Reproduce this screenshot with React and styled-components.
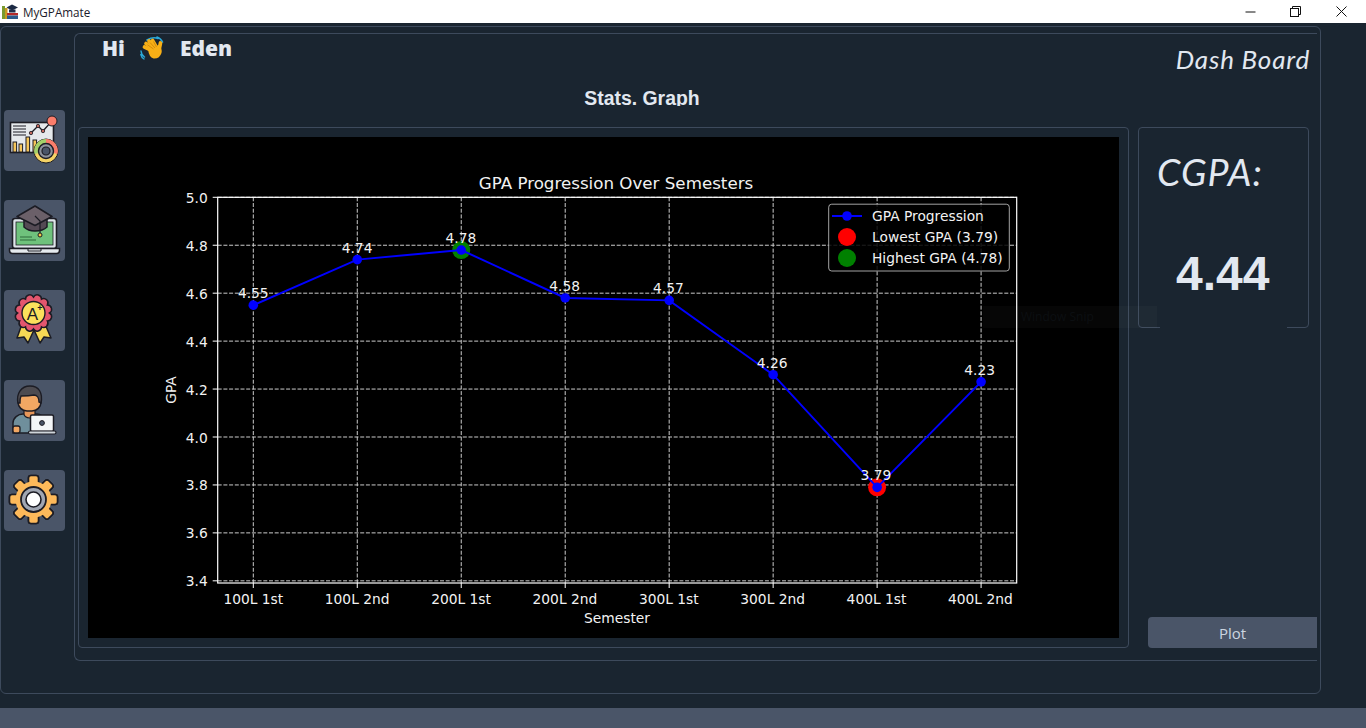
import React from "react";
import styled, { createGlobalStyle } from "styled-components";

const Global = createGlobalStyle`
  html, body { margin: 0; padding: 0; background: #1a2530; overflow: hidden; }
  #root { width: 1366px; height: 728px; }
`;

const Page = styled.div`
  position: relative;
  width: 1366px;
  height: 728px;
  display: flex;
  flex-direction: column;
  background: #1a2530;
  color: #e2e8f0;
  font-family: "Open Sans", sans-serif;
  overflow: hidden;
`;
const TitleBar = styled.header`
  flex: 0 0 23px;
  display: flex;
  align-items: center;
  background: #fff;
  color: #111;
  font-size: 11.7px;
  padding-left: 2px;
`;
const AppName = styled.span`
  margin-left: 5px;
  flex: 1;
  color: #1a1a2a;
  margin-top: 1px;
  font-family: "Open Sans", sans-serif;
`;
const WinButton = styled.span`
  width: 45.5px;
  height: 23px;
  display: flex;
  align-items: center;
  justify-content: center;
`;
const WinControls = styled.div`
  display: flex;
  padding-right: 2px;
`;
const Main = styled.main`
  flex: 1;
  padding: 3px 45px 14px 0;
  display: flex;
  min-height: 0;
`;
const StatusBar = styled.footer`
  flex: 0 0 20px;
  background: #4a5568;
`;
const OuterFrame = styled.div`
  width: 1321px;
  box-sizing: border-box;
  border: 1px solid #3d4a5c;
  border-radius: 6px;
  display: flex;
  align-items: flex-start;
`;
const Sidebar = styled.nav`
  flex: 0 0 73px;
  box-sizing: border-box;
  padding: 83px 0 0 3px;
  display: flex;
  flex-direction: column;
  gap: 29px;
`;
const NavButton = styled.button`
  width: 61px;
  height: 61px;
  padding: 0;
  border: 0;
  border-radius: 4px;
  background: #4a5568;
  display: block;
`;
const ContentFrame = styled.section`
  margin-top: 6px;
  width: 1243px;
  height: 628px;
  box-sizing: border-box;
  border: 1px solid #3d4a5c;
  border-right: 0;
  border-radius: 6px 0 0 6px;
  display: flex;
  flex-direction: column;
`;
const TopRow = styled.div`
  height: 54px;
  display: flex;
  justify-content: space-between;
  align-items: flex-start;
`;
const Greeting = styled.div`
  display: flex;
  align-items: center;
  gap: 15.5px;
  padding: 0 0 0 27px;
  font-size: 21px;
  line-height: 28px;
  font-weight: 800;
`;
const HandTitle = styled.div`
  font-family: "Lato", sans-serif;
  font-style: italic;
  font-size: 26px;
  line-height: 32px;
  letter-spacing: 0.8px;
  margin: 9px 7px 0 0;
`;
const SectionTitle = styled.h2`
  margin: 0;
  height: 18px;
  overflow: hidden;
  padding-right: 108px;
  text-align: center;
  font-family: "Liberation Sans", sans-serif;
  font-size: 19.4px;
  line-height: 21px;
  font-weight: 700;
`;
const BodyRow = styled.div`
  margin-top: 21px;
  padding-left: 3px;
  display: flex;
  gap: 9px;
`;
const ChartPanel = styled.div`
  width: 1051px;
  height: 521px;
  box-sizing: border-box;
  border: 1px solid #3d4a5c;
  border-radius: 4px;
  padding: 9px;
`;
const Canvas = styled.svg`
  display: block;
  width: 1031px;
  height: 501px;
  background: #000;
`;
const SideColumn = styled.aside`
  width: 179px;
  height: 521px;
  display: flex;
  flex-direction: column;
  justify-content: space-between;
`;
const CgpaPanel = styled.div`
  position: relative;
  width: 171px;
  height: 201px;
  box-sizing: border-box;
  border: 1px solid #3d4a5c;
  border-radius: 4px;
  padding: 24px 0 0 18px;
`;
const CgpaLabel = styled.div`
  font-family: "Lato", sans-serif;
  font-style: italic;
  font-size: 37.5px;
  line-height: 40px;
  letter-spacing: 1px;
`;
const CgpaValue = styled.div`
  margin: 54px 0 0 19px;
  font-family: "Liberation Sans", sans-serif;
  font-size: 48px;
  line-height: 56px;
  font-weight: 700;
`;
const BorderGap = styled.span`
  position: absolute;
  left: 21px;
  bottom: -1px;
  width: 127px;
  height: 1px;
  background: #1a2530;
`;
const PlotButton = styled.button`
  align-self: flex-end;
  width: 169px;
  height: 31px;
  border: 0;
  border-radius: 4px 0 0 4px;
  background: #4a5568;
  color: #cbd5e0;
  font-family: "Open Sans", sans-serif;
  font-size: 15px;
`;
const GhostTip = styled.div`
  position: absolute;
  left: 983px;
  top: 306px;
  width: 174px;
  height: 22px;
  box-sizing: border-box;
  padding-left: 38px;
  background: rgba(255, 255, 255, 0.025);
  color: #0c0f12;
  font-size: 12px;
  line-height: 22px;
`;
const ChartText = styled.text`
  font-family: "DejaVu Sans", sans-serif;
  font-size: ${(p) => p.$size || 13.8}px;
  fill: ${(p) => p.$fill || "#f2f2f2"};
  text-anchor: ${(p) => p.$anchor || "middle"};
  dominant-baseline: central;
`;

const X0 = 253.3, DX = 103.97;
const yOf = (v) => 197.3 + (5 - v) * 239.7;
const data = [
  ["100L 1st", 4.55], ["100L 2nd", 4.74], ["200L 1st", 4.78], ["200L 2nd", 4.58],
  ["300L 1st", 4.57], ["300L 2nd", 4.26], ["400L 1st", 3.79], ["400L 2nd", 4.23],
];
const pts = data.map((d, i) => [X0 + DX * i, yOf(d[1])]);
const yTicks = ["5.0", "4.8", "4.6", "4.4", "4.2", "4.0", "3.8", "3.6", "3.4"];

function Chart() {
  const L = 217.7, R = 1016.7, T = 197.3, B = 583;
  return (
    <Canvas viewBox="88 137 1031 501">
      <ChartText x="616" y="183" $size={16.7}>GPA Progression Over Semesters</ChartText>
      {yTicks.map((t) => {
        const y = yOf(parseFloat(t));
        return (
          <g key={t}>
            <line x1={L} x2={R} y1={y} y2={y} stroke="#ccc" strokeWidth="1" strokeDasharray="4 1.7" />
            <line x1={L - 5} x2={L} y1={y} y2={y} stroke="#fff" strokeWidth="1" />
            <ChartText x={L - 10} y={y + 0.5} $anchor="end">{t}</ChartText>
          </g>
        );
      })}
      {pts.map((p, i) => (
        <g key={i}>
          <line x1={p[0]} x2={p[0]} y1={T} y2={B} stroke="#ccc" strokeWidth="1" strokeDasharray="4 1.7" />
          <line x1={p[0]} x2={p[0]} y1={B} y2={B + 5} stroke="#fff" strokeWidth="1" />
          <ChartText x={p[0] - 0.1 * i} y="599">{data[i][0]}</ChartText>
        </g>
      ))}
      <rect x={L} y={T} width={R - L} height={B - T} fill="none" stroke="#fff" strokeWidth="1.2" />
      <circle cx={pts[6][0]} cy={pts[6][1]} r="9" fill="#f00" />
      <circle cx={pts[2][0]} cy={pts[2][1]} r="9" fill="#008000" />
      <polyline points={pts.map((p) => p.join(",")).join(" ")} fill="none" stroke="#00f" strokeWidth="2" />
      {pts.map((p, i) => <circle key={i} cx={p[0]} cy={p[1]} r="4.8" fill="#00f" />)}
      {pts.map((p, i) => (
        <ChartText key={i} x={p[0] - 0.2 * i} y={p[1] - 12}>{data[i][1].toFixed(2)}</ChartText>
      ))}
      <ChartText x="617" y="618">Semester</ChartText>
      <ChartText x="171" y="390" transform="rotate(-90 171 390)">GPA</ChartText>
      <rect x="828.7" y="204.2" width="180.6" height="66.8" rx="3" fill="#000" fillOpacity="0.85" stroke="#c0c0c0" strokeOpacity="0.85" strokeWidth="1" />
      <line x1="832" x2="862" y1="216" y2="216" stroke="#00f" strokeWidth="2" />
      <circle cx="847" cy="216" r="4.8" fill="#00f" />
      <circle cx="847" cy="237" r="9" fill="#f00" />
      <circle cx="847" cy="258" r="9" fill="#008000" />
      <ChartText x="872" y="216" $anchor="start">GPA Progression</ChartText>
      <ChartText x="872" y="237" $anchor="start">Lowest GPA (3.79)</ChartText>
      <ChartText x="872" y="258" $anchor="start">Highest GPA (4.78)</ChartText>
    </Canvas>
  );
}

const Ink = "#1c1c24";

function DashIcon() {
  return (
    <svg width="61" height="61" viewBox="0 0 61 61">
      <rect x="6.5" y="12.5" width="43" height="30" fill="#e6e9ec" stroke={Ink} strokeWidth="1.6" />
      <path d="M9 16h13M9 19h13M9 22h13M9 25h13" stroke={Ink} strokeWidth="1.2" />
      <polyline points="27,23 34,16 39,21 47,12" fill="none" stroke={Ink} strokeWidth="1.3" />
      <circle cx="27" cy="23" r="1.7" fill="#c2685c" stroke={Ink} strokeWidth=".8" />
      <circle cx="34" cy="16" r="1.7" fill="#c2685c" stroke={Ink} strokeWidth=".8" />
      <circle cx="39" cy="21" r="1.7" fill="#c2685c" stroke={Ink} strokeWidth=".8" />
      <circle cx="48" cy="11" r="5" fill="#fb7d6b" stroke={Ink} strokeWidth="1" />
      {[[9, 32, 10], [15, 34, 8], [22, 27, 15], [29, 30, 12]].map((b) => (
        <rect key={b[0]} x={b[0]} y={b[1]} width="3.6" height={b[2]} fill="#f6c65b" stroke={Ink} strokeWidth="1" />
      ))}
      <circle cx="42" cy="41" r="12" fill="#f6d365" stroke={Ink} strokeWidth="1" />
      <path d="M42 41 L30.5 44 A12 12 0 0 1 42 29 Z" fill="#a3d06a" />
      <path d="M42 41 L42 29 A12 12 0 0 1 53.5 44 Z" fill="#fb7d6b" />
      <circle cx="42" cy="41" r="7.5" fill="#8d929c" stroke={Ink} strokeWidth="1.4" />
      <circle cx="42" cy="41" r="4" fill="#4a5568" stroke={Ink} strokeWidth="1.2" />
    </svg>
  );
}

function CapIcon() {
  return (
    <svg width="61" height="61" viewBox="0 0 61 61">
      <rect x="8.5" y="18.5" width="44" height="30" rx="2.5" fill="#dfe5ea" stroke={Ink} strokeWidth="1.6" />
      <rect x="12" y="22" width="37" height="23" fill="#6fc27c" stroke={Ink} strokeWidth=".8" />
      <path d="M16 37h12M16 40h16" stroke="#2e6b3a" strokeWidth="1" />
      <path d="M5.5 48.5h50v2a3 3 0 0 1-3 3h-44a3 3 0 0 1-3-3z" fill="#e6eaee" stroke={Ink} strokeWidth="1.5" />
      <path d="M24 49v2h13v-2" fill="none" stroke={Ink} strokeWidth="1" />
      <path d="M20 19v8c3 3 7 4 11 4s9-1 12-4v-8z" fill="#544a54" stroke={Ink} strokeWidth="1.5" />
      <path d="M31 6 L48 16.5 L31 25.5 L13 16.5 Z" fill="#6b6069" stroke={Ink} strokeWidth="1.6" strokeLinejoin="round" />
      <path d="M31 16 L36 21 V33" fill="none" stroke={Ink} strokeWidth="1.2" />
      <circle cx="36" cy="35" r="2" fill="#f6c945" stroke={Ink} strokeWidth="1" />
    </svg>
  );
}

const scallop = (() => {
  const n = 12, out = [];
  for (let i = 0; i < n; i++) {
    const a = (i / n) * Math.PI * 2, b = ((i + 1) / n) * Math.PI * 2;
    const r = 16;
    const p1 = [29.5 + r * Math.cos(a), 23 + r * Math.sin(a)];
    const p2 = [29.5 + r * Math.cos(b), 23 + r * Math.sin(b)];
    out.push(`${i === 0 ? `M${p1[0].toFixed(2)} ${p1[1].toFixed(2)}` : ""}A4.3 4.3 0 0 1 ${p2[0].toFixed(2)} ${p2[1].toFixed(2)}`);
  }
  return out.join("") + "Z";
})();

function MedalIcon() {
  return (
    <svg width="61" height="61" viewBox="0 0 61 61">
      <path d="M18 34 L13 48 L20 47 L24 53 L30 40 L36 53 L40 47 L47 48 L41 34 Z" fill="#f6d955" stroke={Ink} strokeWidth="1.5" strokeLinejoin="round" />
      <path d={scallop} fill="#e4566e" stroke={Ink} strokeWidth="1.5" />
      <circle cx="29.5" cy="23" r="11.5" fill="#fbe05c" stroke={Ink} strokeWidth="1.4" />
      <text x="28.5" y="29.5" fontFamily="Liberation Sans, sans-serif" fontSize="17" textAnchor="middle" fill={Ink}>A</text>
      <text x="36" y="21" fontFamily="Liberation Sans, sans-serif" fontSize="9" fontWeight="700" textAnchor="middle" fill={Ink}>+</text>
    </svg>
  );
}

function PersonIcon() {
  return (
    <svg width="61" height="61" viewBox="0 0 61 61">
      <path d="M9 53V43c0-5 5-9 10-9h14c4 0 6 2 7 6v13z" fill="#6f8f9c" stroke={Ink} strokeWidth="1.5" />
      <rect x="9" y="46" width="7" height="7" rx="2" fill="#f2a763" stroke={Ink} strokeWidth="1.3" />
      <path d="M20 27h11v7c0 2-2.5 4-5.5 4S20 36 20 34z" fill="#e8975a" stroke={Ink} strokeWidth="1.2" />
      <rect x="14" y="12" width="23" height="19" rx="9" fill="#f2a763" stroke={Ink} strokeWidth="1.5" />
      <path d="M14 23c-2-9 3-17 12-17s13 7 11 17l-2-1c0-4-2-7-5-7-5 1-9 1-13 1-1 2-1 4-1 7z" fill="#4d4b50" stroke={Ink} strokeWidth="1.4" />
      <rect x="26.5" y="35" width="23" height="16.5" rx="1.5" fill="#f4f6f8" stroke={Ink} strokeWidth="1.5" />
      <circle cx="38" cy="43" r="2.4" fill="#4a5568" stroke={Ink} strokeWidth="1" />
      <rect x="24.5" y="51" width="27.5" height="3" rx="1.5" fill="#cfd5da" stroke={Ink} strokeWidth="1.2" />
    </svg>
  );
}

function GearIcon() {
  return (
    <svg width="61" height="61" viewBox="0 0 61 61">
      {[0, 45, 90, 135, 180, 225, 270, 315].map((a) => (
        <rect key={a} x="24.5" y="5.5" width="10" height="48" rx="2.5" fill="#fdb95a" stroke={Ink} strokeWidth="1.6" transform={`rotate(${a} 29.5 29.5)`} />
      ))}
      <circle cx="29.5" cy="29.5" r="18" fill="#fdb95a" />
      <circle cx="29.5" cy="29.5" r="12.5" fill="#a0a6b2" stroke={Ink} strokeWidth="1.8" />
      <circle cx="29.5" cy="29.5" r="7.5" fill="#fff" stroke={Ink} strokeWidth="1.6" />
    </svg>
  );
}

function WaveHand() {
  return (
    <svg width="24" height="24" viewBox="0 0 24 24">
      <path d="M7 4 Q13 0.5 18 2.5 M17 1 Q21 2.5 22.5 6" fill="none" stroke="#2aa8d8" strokeWidth="1.6" strokeLinecap="round" />
      <path d="M1 15 Q1.5 19 4.5 21 M0.8 18.5 Q1.5 21.5 4 23" fill="none" stroke="#2aa8d8" strokeWidth="1.4" strokeLinecap="round" />
      <g stroke="#f8b016" strokeWidth="3.7" strokeLinecap="round">
        <path d="M13 15 L4.5 11" />
        <path d="M13.5 13 L6 7.5" />
        <path d="M15 12 L9 5" />
        <path d="M16.5 11.5 L12.5 4.5" />
        <path d="M19 14 L20.5 7" />
      </g>
      <path d="M8 13 L19 9 Q22.5 13 21.5 17 Q19.5 23 13.5 22.5 Q9 21.5 8 13Z" fill="#f8b016" />
      <path d="M7.5 8.8 L13.5 13 M10 6.5 L15 12 M13.5 5.5 L16.5 11" stroke="#c97d06" strokeWidth=".7" fill="none" />
    </svg>
  );
}

function AppIcon() {
  return (
    <svg width="16" height="16" viewBox="0 0 16 16">
      <rect x="0" y="2" width="3" height="13" fill="#7a9a2e" />
      <rect x="3" y="4" width="2.5" height="11" fill="#c99a20" />
      <rect x="5" y="9" width="11" height="2.4" fill="#b52a2a" />
      <rect x="5" y="11.5" width="11" height="3.5" fill="#2c5a8c" />
      <path d="M10 0.5 L16 3.5 L10 6.5 L4.5 3.5Z" fill="#1c2a44" />
      <path d="M7 5.5v3h6.5v-3" fill="#22304c" />
    </svg>
  );
}

export default function App() {
  return (
    <Page>
      <Global />
      <TitleBar>
        <AppIcon />
        <AppName>MyGPAmate</AppName>
        <WinControls>
          <WinButton>
            <svg width="11" height="11" viewBox="0 0 11 11"><path d="M0.5 6h10" stroke="#111" strokeWidth="1" /></svg>
          </WinButton>
          <WinButton>
            <svg width="11" height="11" viewBox="0 0 11 11" fill="none" stroke="#111"><path d="M2.5 2.5v-2h8v8h-2" /><rect x="0.5" y="2.5" width="8" height="8" /></svg>
          </WinButton>
          <WinButton>
            <svg width="11" height="11" viewBox="0 0 11 11" stroke="#111"><path d="M0.5 0.5l10 10M10.5 0.5l-10 10" /></svg>
          </WinButton>
        </WinControls>
      </TitleBar>
      <Main>
        <OuterFrame>
          <Sidebar>
            <NavButton><DashIcon /></NavButton>
            <NavButton><CapIcon /></NavButton>
            <NavButton><MedalIcon /></NavButton>
            <NavButton><PersonIcon /></NavButton>
            <NavButton><GearIcon /></NavButton>
          </Sidebar>
          <ContentFrame>
            <TopRow>
              <Greeting>
                <span>Hi</span>
                <WaveHand />
                <span>Eden</span>
              </Greeting>
              <HandTitle>Dash Board</HandTitle>
            </TopRow>
            <SectionTitle>Stats. Graph</SectionTitle>
            <BodyRow>
              <ChartPanel><Chart /></ChartPanel>
              <SideColumn>
                <CgpaPanel>
                  <CgpaLabel>CGPA:</CgpaLabel>
                  <CgpaValue>4.44</CgpaValue>
                  <BorderGap />
                </CgpaPanel>
                <PlotButton>Plot</PlotButton>
              </SideColumn>
            </BodyRow>
          </ContentFrame>
        </OuterFrame>
      </Main>
      <StatusBar />
      <GhostTip>Window Snip</GhostTip>
    </Page>
  );
}
